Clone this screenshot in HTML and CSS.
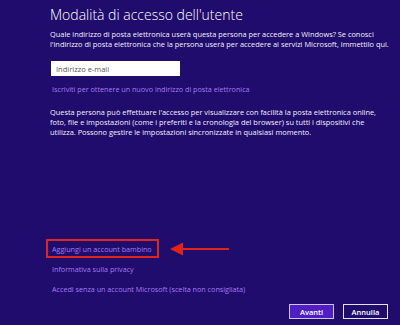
FILE: index.html
```html
<!DOCTYPE html>
<html lang="it">

<head>
    <meta charset="UTF-8">
    <meta name="viewport" content="width=device-width, initial-scale=1.0">
    <title>Modalità di accesso dell'utente</title>
    <link rel="stylesheet" href="styles.css">
</head>

<body>
    <div class="page">
        <h1 class="title">Modalità di accesso dell'utente</h1>
        <p class="text intro">Quale indirizzo di posta elettronica userà questa persona per accedere a Windows? Se conosci<br>l'indirizzo di posta elettronica che la persona userà per accedere ai servizi Microsoft, immettilo qui.</p>
        <input class="email" type="text" placeholder="Indirizzo e-mail">
        <a class="link signup" href="#">Iscriviti per ottenere un nuovo indirizzo di posta elettronica</a>
        <p class="text info">Questa persona può effettuare l'accesso per visualizzare con facilità la posta elettronica online,<br>foto, file e impostazioni (come i preferiti e la cronologia del browser) su tutti i dispositivi che<br>utilizza. Possono gestire le impostazioni sincronizzate in qualsiasi momento.</p>
        <div class="links">
            <a class="link marked" href="#">Aggiungi un account bambino
                <svg class="arrow" width="60" height="14" viewBox="0 0 60 14">
                    <path d="M0 7 L13 0.5 L13 13.5 Z" fill="#e2231a"/>
                    <rect x="12" y="6" width="47" height="2" fill="#e2231a"/>
                </svg>
            </a>
            <a class="link" href="#">Informativa sulla privacy</a>
            <a class="link" href="#">Accedi senza un account Microsoft (scelta non consigliata)</a>
        </div>
        <div class="actions">
            <button class="button primary">Avanti</button>
            <button class="button">Annulla</button>
        </div>
    </div>
</body>

</html>
```

FILE: styles.css
```css
body {
    margin: 0;
    width: 400px;
    height: 325px;
    overflow: hidden;
    background-color: #1f0c6c;
    font-family: "Open Sans", "Noto Sans", sans-serif;
    color: #f2f0fa;
}
.page {
    box-sizing: border-box;
    height: 325px;
    display: flex;
    flex-direction: column;
    align-items: flex-start;
    padding: 5px 12px 6px 50px;
}
.title {
    margin: 0;
    font-size: 14px;
    font-weight: 300;
    line-height: 20px;
    color: #fff;
}
.text {
    margin: 0;
    font-size: 7.4px;
    line-height: 9.7px;
    white-space: nowrap;
}
.intro {
    margin-top: 5px;
}
.email {
    margin-top: 12px;
    margin-left: 1px;
    box-sizing: border-box;
    width: 129px;
    height: 15px;
    padding: 0 5px;
    border: none;
    background: #fff;
    font-family: inherit;
    font-size: 7.5px;
    outline: none;
}
.email::placeholder {
    color: #5a5a5a;
}
.link {
    display: block;
    margin-left: 2px;
    font-size: 7.2px;
    line-height: 10px;
    color: #a67af2;
    text-decoration: none;
    white-space: nowrap;
}
.signup {
    margin-top: 8px;
}
.info {
    margin-top: 14px;
}
.links {
    display: flex;
    flex-direction: column;
    align-items: flex-start;
    gap: 10px;
    margin-top: auto;
}
.marked {
    position: relative;
}
.marked::before {
    content: "";
    position: absolute;
    left: -6px;
    right: -7px;
    top: -5px;
    bottom: -4px;
    border: 2px solid #e2231a;
}
.arrow {
    position: absolute;
    left: calc(100% + 18px);
    top: -2px;
}
.actions {
    display: flex;
    gap: 9px;
    align-self: flex-end;
    margin-top: 10px;
}
.button {
    box-sizing: border-box;
    width: 45px;
    height: 15px;
    padding: 0;
    border: 1px solid #e6e2f4;
    background: transparent;
    font-family: inherit;
    font-size: 7.5px;
    font-weight: 600;
    color: #fff;
    cursor: pointer;
}
.button.primary {
    background: #4f1fc4;
    border-color: #cfc4ee;
}
```
